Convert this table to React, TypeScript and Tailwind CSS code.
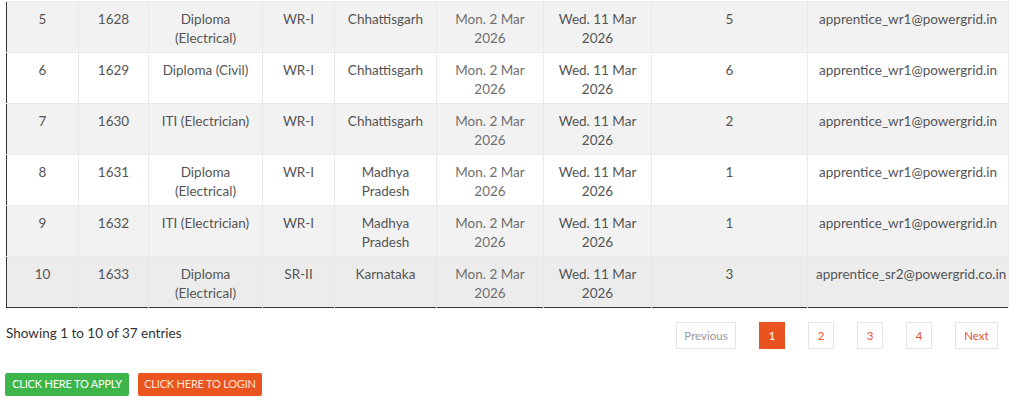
import React from "react";

type Row = {
  n: string;
  code: string;
  disc: string;
  region: string;
  state: string;
  start: string;
  end: string;
  seats: string;
  email: string;
};

const rows: Row[] = [
  { n: "5", code: "1628", disc: "Diploma (Electrical)", region: "WR-I", state: "Chhattisgarh", start: "Mon. 2 Mar 2026", end: "Wed. 11 Mar 2026", seats: "5", email: "apprentice_wr1@powergrid.in" },
  { n: "6", code: "1629", disc: "Diploma (Civil)", region: "WR-I", state: "Chhattisgarh", start: "Mon. 2 Mar 2026", end: "Wed. 11 Mar 2026", seats: "6", email: "apprentice_wr1@powergrid.in" },
  { n: "7", code: "1630", disc: "ITI (Electrician)", region: "WR-I", state: "Chhattisgarh", start: "Mon. 2 Mar 2026", end: "Wed. 11 Mar 2026", seats: "2", email: "apprentice_wr1@powergrid.in" },
  { n: "8", code: "1631", disc: "Diploma (Electrical)", region: "WR-I", state: "Madhya Pradesh", start: "Mon. 2 Mar 2026", end: "Wed. 11 Mar 2026", seats: "1", email: "apprentice_wr1@powergrid.in" },
  { n: "9", code: "1632", disc: "ITI (Electrician)", region: "WR-I", state: "Madhya Pradesh", start: "Mon. 2 Mar 2026", end: "Wed. 11 Mar 2026", seats: "1", email: "apprentice_wr1@powergrid.in" },
  { n: "10", code: "1633", disc: "Diploma (Electrical)", region: "SR-II", state: "Karnataka", start: "Mon. 2 Mar 2026", end: "Wed. 11 Mar 2026", seats: "3", email: "apprentice_sr2@powergrid.co.in" },
];

const widths = [72, 70, 114, 72, 102, 107, 108, 156, 201];

export default function App() {
  return (
    <div
      className="w-[1024px] h-[408px] overflow-hidden bg-white text-[#555]"
      style={{ fontFamily: 'Lato, "Noto Sans", sans-serif' }}
    >
      <div className="pt-[1px] pl-[6px]">
        <table className="table-fixed border-collapse w-[1002px] border-l border-b border-l-[#333] border-b-[#333] text-[13.5px] leading-[19px]">
          <colgroup>
            {widths.map((w, i) => (
              <col key={i} style={{ width: w }} />
            ))}
          </colgroup>
          <tbody>
            {rows.map((r, i) => {
              const bg =
                i === 5 ? "bg-[#ececec]" : i % 2 === 0 ? "bg-[#f2f2f2]" : "bg-white";
              const td =
                "h-[51px] align-top text-center pt-[8px] px-[8px] border-r border-r-[#e8e8e8] border-t border-t-[#eaeaea]";
              return (
                <tr key={i} className={bg}>
                  <td className={td}>{r.n}</td>
                  <td className={td}>{r.code}</td>
                  <td className={td}>{r.disc}</td>
                  <td className={td}>{r.region}</td>
                  <td className={td}>{r.state}</td>
                  <td className={`${td} text-[#6f6f6f]`}>{r.start}</td>
                  <td className={td}>{r.end}</td>
                  <td className={td}>{r.seats}</td>
                  <td className={`${td} px-0 whitespace-nowrap`}>{r.email}</td>
                </tr>
              );
            })}
          </tbody>
        </table>
      </div>

      <div className="flex items-start justify-between pl-[6px] pr-[26px] mt-[14px]">
        <div className="text-[13.5px] leading-[19px] pt-[2px] text-[#333]">
          Showing 1 to 10 of 37 entries
        </div>
        <div className="flex items-center gap-[23px] text-[11.5px]">
          <div className="w-[60px] h-[27px] flex items-center justify-center border border-[#e4e4e4] text-[#999]">
            Previous
          </div>
          <div className="w-[26px] h-[27px] flex items-center justify-center bg-[#e8531f] text-white">
            1
          </div>
          <div className="w-[26px] h-[27px] flex items-center justify-center border border-[#e4e4e4] text-[#e8531f]">
            2
          </div>
          <div className="w-[26px] h-[27px] flex items-center justify-center border border-[#e4e4e4] text-[#e8531f]">
            3
          </div>
          <div className="w-[26px] h-[27px] flex items-center justify-center border border-[#e4e4e4] text-[#e8531f]">
            4
          </div>
          <div className="w-[43px] h-[27px] flex items-center justify-center border border-[#e4e4e4] text-[#e8531f]">
            Next
          </div>
        </div>
      </div>

      <div className="flex gap-[9px] pl-[5px] mt-[24px]">
        <div className="w-[124px] h-[23px] rounded-[2px] bg-[#3db54a] text-white text-[11px] flex items-center justify-center tracking-[-0.2px]">
          CLICK HERE TO APPLY
        </div>
        <div className="w-[124px] h-[23px] rounded-[2px] bg-[#e9541f] text-[#fde3d6] text-[11px] flex items-center justify-center tracking-[-0.2px]">
          CLICK HERE TO LOGIN
        </div>
      </div>
    </div>
  );
}
